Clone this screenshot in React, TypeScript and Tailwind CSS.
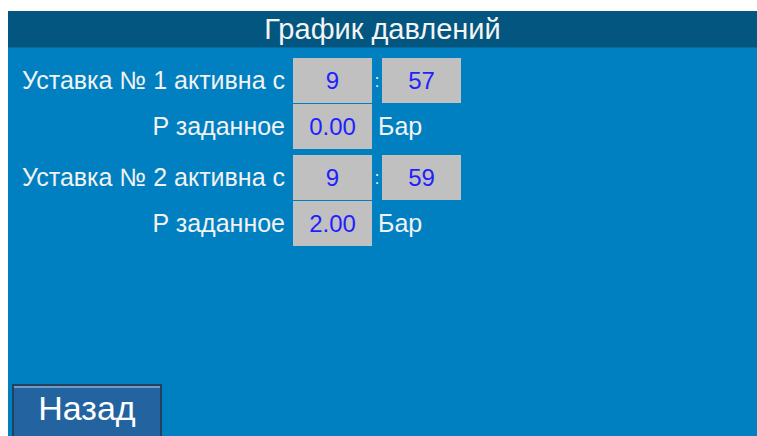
import React from 'react';

interface Setpoint {
  id: number;
  hour: string;
  minute: string;
  pressure: string;
}

const setpoints: Setpoint[] = [
  { id: 1, hour: '9', minute: '57', pressure: '0.00' },
  { id: 2, hour: '9', minute: '59', pressure: '2.00' },
];

// Grey numeric field as on the panel
const ValueBox = ({ value }: { value: string }) => (
  <div className="w-[79px] h-[45px] bg-[#c0c0c0] flex items-center justify-center text-[24px] text-[#1f1fff]">
    {value}
  </div>
);

const Label = ({ children }: { children: React.ReactNode }) => (
  <div className="w-[285px] pr-[8px] text-right text-[25px] text-[#f2f2f2] whitespace-nowrap">{children}</div>
);

const SetpointGroup = ({ sp }: { sp: Setpoint }) => (
  <div className="flex flex-col gap-[1px]">
    <div className="flex items-center">
      <Label>Уставка № {sp.id} активна с</Label>
      <ValueBox value={sp.hour} />
      <div className="w-[10px] text-center text-[18px] leading-none text-[#e8e8e8]">:</div>
      <ValueBox value={sp.minute} />
    </div>
    <div className="flex items-center">
      <Label>P заданное</Label>
      <ValueBox value={sp.pressure} />
      <div className="pl-[6px] text-[25px] text-[#f2f2f2]">Бар</div>
    </div>
  </div>
);

export default function App() {
  return (
    <div
      className="w-[757px] h-[436px] bg-white pt-[11px] pl-[8px] overflow-hidden"
      style={{ fontFamily: '"Liberation Sans", Arial, sans-serif' }}
    >
      <div className="h-full flex flex-col">
        <div className="h-[37px] bg-[#02567f] border-b border-[#0a6a99] flex items-center justify-center text-[29px] leading-none text-[#f4f4f4]">
          График давлений
        </div>
        <div className="flex-1 bg-[#0080c1] flex flex-col pt-[10px] overflow-hidden">
          <div className="flex flex-col gap-[6px]">
            {setpoints.map((sp) => (
              <SetpointGroup key={sp.id} sp={sp} />
            ))}
          </div>
          <button className="mt-auto ml-[4px] w-[150px] h-[52px] shrink-0 bg-[#2363a0] border-2 border-[#23405c] border-b-0 shadow-[inset_0_2px_0_#6f9cc6] text-[34px] leading-none text-white pb-[6px]">
            Назад
          </button>
        </div>
      </div>
    </div>
  );
}
